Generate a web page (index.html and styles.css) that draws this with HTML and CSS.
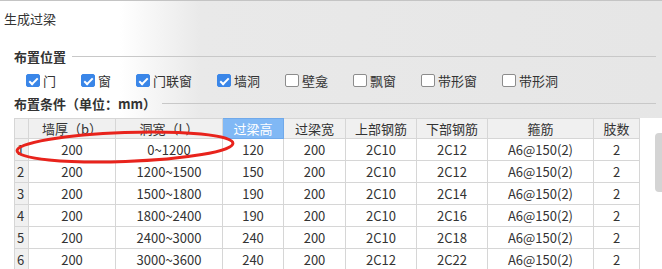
FILE: index.html
```html
<!DOCTYPE html>
<html lang="zh-CN">
<head>
    <meta charset="UTF-8">
    <title>生成过梁</title>
    <link rel="stylesheet" href="styles.css">
</head>
<body>
    <div class="dialog">
        <div class="title">生成过梁</div>

        <div class="section-head">布置位置</div>
        <div class="options">
            <label class="opt"><span class="box checked"></span>门</label>
            <label class="opt"><span class="box checked"></span>窗</label>
            <label class="opt"><span class="box checked"></span>门联窗</label>
            <label class="opt"><span class="box checked"></span>墙洞</label>
            <label class="opt"><span class="box"></span>壁龛</label>
            <label class="opt"><span class="box"></span>飘窗</label>
            <label class="opt"><span class="box"></span>带形窗</label>
            <label class="opt"><span class="box"></span>带形洞</label>
        </div>

        <div class="section-head">布置条件（单位：mm）</div>
        <div class="grid-wrap">
            <table class="grid">
                <colgroup>
                    <col style="width:14px">
                    <col style="width:87px">
                    <col style="width:107px">
                    <col style="width:61px">
                    <col style="width:62px">
                    <col style="width:71px">
                    <col style="width:71px">
                    <col style="width:106px">
                    <col style="width:46px">
                </colgroup>
                <thead>
                    <tr>
                        <th class="num"></th>
                        <th>墙厚（b）</th>
                        <th>洞宽（L）</th>
                        <th class="active">过梁高</th>
                        <th>过梁宽</th>
                        <th>上部钢筋</th>
                        <th>下部钢筋</th>
                        <th>箍筋</th>
                        <th>肢数</th>
                    </tr>
                </thead>
                <tbody>
                    <tr><td class="num">1</td><td>200</td><td>0~1200</td><td>120</td><td>200</td><td>2C10</td><td>2C12</td><td>A6@150(2)</td><td>2</td></tr>
                    <tr><td class="num">2</td><td>200</td><td>1200~1500</td><td>150</td><td>200</td><td>2C10</td><td>2C12</td><td>A6@150(2)</td><td>2</td></tr>
                    <tr><td class="num">3</td><td>200</td><td>1500~1800</td><td>190</td><td>200</td><td>2C10</td><td>2C14</td><td>A6@150(2)</td><td>2</td></tr>
                    <tr><td class="num">4</td><td>200</td><td>1800~2400</td><td>190</td><td>200</td><td>2C10</td><td>2C16</td><td>A6@150(2)</td><td>2</td></tr>
                    <tr><td class="num">5</td><td>200</td><td>2400~3000</td><td>240</td><td>200</td><td>2C10</td><td>2C18</td><td>A6@150(2)</td><td>2</td></tr>
                    <tr><td class="num">6</td><td>200</td><td>3000~3600</td><td>240</td><td>200</td><td>2C12</td><td>2C22</td><td>A6@150(2)</td><td>2</td></tr>
                </tbody>
            </table>
            <div class="scroll-thumb"></div>
            <svg class="mark" width="240" height="50" viewBox="0 0 240 50">
                <ellipse cx="111" cy="29" rx="108" ry="14.5" transform="rotate(-2 111 29)"
                         fill="none" stroke="#e8231c" stroke-width="3"/>
            </svg>
        </div>
    </div>
</body>
</html>
```

FILE: styles.css
```css
* {
    box-sizing: border-box;
    margin: 0;
    padding: 0;
}

body {
    font-family: "Noto Sans CJK SC", "Noto Sans", sans-serif;
    font-size: 13px;
    color: #333;
    height: 100vh;
    overflow: hidden;
    background: linear-gradient(90deg, #ffffff 0, #ffffff 120px, #e9e9e9 200px, #e6e6e6 100%);
}

.dialog {
    display: flex;
    flex-direction: column;
    border-top: 1px solid #c4c4c4;
    height: 100%;
}

.title {
    height: 36px;
    line-height: 36px;
    padding-left: 4px;
    font-size: 13px;
    color: #333;
}

.section-head {
    display: flex;
    align-items: center;
    gap: 6px;
    height: 20px;
    margin-top: 3px;
    padding: 0 6px 0 14px;
    font-weight: bold;
    color: #333;
}

.dialog .title + .section-head {
    margin-top: 9px;
}

.section-head::after {
    content: "";
    flex: 1;
    height: 1px;
    background: #c8c8c8;
}

.options {
    display: flex;
    align-items: center;
    gap: 25px;
    height: 20px;
    margin-top: 4px;
    padding-left: 26px;
}

.opt {
    display: flex;
    align-items: center;
    gap: 3px;
}

.box {
    width: 14px;
    height: 13px;
    border: 1px solid #8c8c8c;
    border-radius: 2px;
    background: #fff;
    position: relative;
}

.box.checked {
    border-color: #3a86e8;
    background: #3a86e8;
}

.box.checked::after {
    content: "";
    position: absolute;
    left: 4px;
    top: 1px;
    width: 3px;
    height: 7px;
    border: solid #fff;
    border-width: 0 2px 2px 0;
    transform: rotate(45deg);
}

.grid-wrap {
    position: relative;
    flex: 1;
    min-height: 0;
    overflow: hidden;
    margin-top: 5px;
    padding-left: 14px;
    background: #fff;
}

.grid {
    border-collapse: collapse;
    table-layout: fixed;
    width: 625px;
    font-size: 13px;
}

.grid th,
.grid td {
    border: 1px solid #d6d6d6;
    text-align: center;
    white-space: nowrap;
    overflow: hidden;
    font-weight: normal;
    color: #333;
}

.grid th {
    height: 20px;
    background: #f0f0f0;
    line-height: 18px;
}

.grid th.active {
    background: #80b8f5;
    border-color: #70a9ea;
    color: #fff;
}

.grid td {
    height: 22px;
    line-height: 20px;
    background: #fff;
}

.grid td.num {
    background: #f0f0f0;
    text-align: left;
    padding-left: 2px;
}

.scroll-thumb {
    position: absolute;
    right: 0;
    top: 15px;
    width: 7px;
    height: 59px;
    border-radius: 4px 0 0 4px;
    background: #d4d4d4;
}

.mark {
    position: absolute;
    left: 14px;
    top: 0;
}
```
